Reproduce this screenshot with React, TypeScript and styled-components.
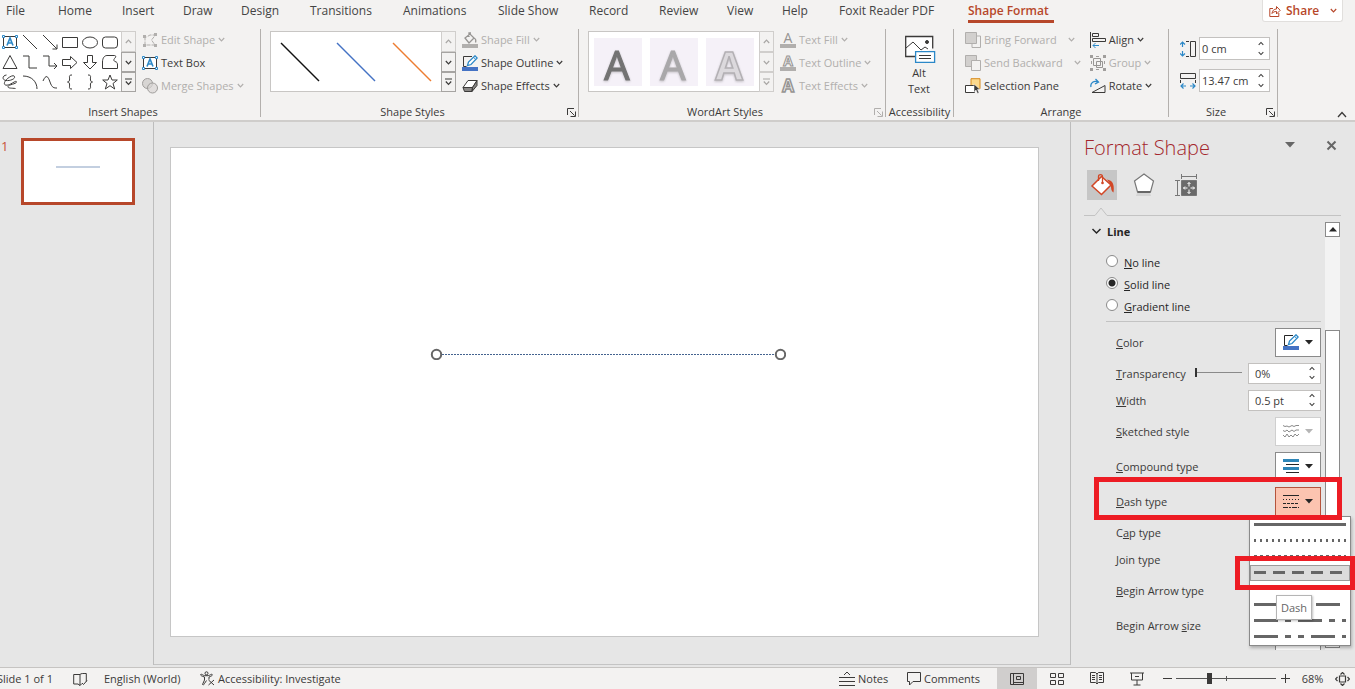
import React from "react";
import styled, { createGlobalStyle, css } from "styled-components";

const RED = "#b7472a";
const INK = "#3b3a39";
const DIM = "#b1afad";
const BLUE = "#2b88c8";

const Global = createGlobalStyle`
  * { box-sizing: border-box; }
  body { margin: 0; overflow: hidden; }
  body, button, input { font-family: "Open Sans", "Noto Sans", sans-serif; font-size: 11px; color: ${INK}; }
  button { padding: 0; margin: 0; border: 0; background: none; white-space: nowrap; }
`;

const Window = styled.div`
  height: 100vh;
  min-width: 1355px;
  display: flex;
  flex-direction: column;
  background: #e6e6e6;
`;

/* ---------- tab strip ---------- */
const TabStrip = styled.nav`
  display: flex;
  height: 29px;
  flex: none;
  background: #f3f2f1;
  padding-left: 6px;
`;
const Tab = styled.button<{ $w: number; $active?: boolean }>`
  width: ${(p) => p.$w}px;
  height: 23px;
  text-align: left;
  font-size: 12px;
  line-height: 22px;
  color: #444;
  display: flex;
  ${(p) => p.$active && css`
    color: ${RED};
    font-weight: 600;
    border-bottom: 3px solid ${RED};
  `}
`;
const ShareButton = styled.button`
  margin-left: auto;
  margin-right: 12px;
  width: 81px;
  height: 22px;
  background: #fff;
  border: 1px solid #e1dfdd;
  border-top: 0;
  border-radius: 0 0 3px 3px;
  display: flex;
  align-items: center;
  gap: 5px;
  padding-left: 6px;
  color: ${RED};
  font-size: 12px;
  font-weight: 600;
  svg:last-child { margin-left: 6px; }
`;

/* ---------- ribbon ---------- */
const Ribbon = styled.div`
  display: flex;
  flex: none;
  height: 93px;
  background: #f3f2f1;
  border-bottom: 2px solid #cfcdcb;
`;
const Group = styled.section<{ $w: number }>`
  width: ${(p) => p.$w}px;
  height: 88px;
  display: flex;
  flex-direction: column;
  border-right: 1px solid #b3b0ad;
`;
const GroupBody = styled.div<{ $left?: number; $gap?: number }>`
  flex: 1;
  display: flex;
  align-items: flex-start;
  gap: ${(p) => p.$gap ?? 6}px;
  padding: 2px 0 0 ${(p) => p.$left ?? 9}px;
`;
const GroupFooter = styled.div`
  height: 10px;
  display: flex;
  align-items: center;
  line-height: 14px;
`;
const GroupName = styled.span`
  flex: 1;
  text-align: center;
  white-space: nowrap;
`;
const Launcher = styled.button<{ $dim?: boolean }>`
  width: 14px;
  height: 12px;
  color: ${(p) => (p.$dim ? DIM : INK)};
  display: flex;
  align-items: center;
  justify-content: center;
`;
const Gallery = styled.div<{ $flush?: boolean }>`
  display: flex;
  height: 61px;
  background: #fff;
  border: 1px solid #c8c6c4;
  border-right: 0;
  ${(p) => p.$flush && css`border-left: 0;`}
`;
const ShapeGrid = styled.div`
  display: grid;
  grid-template-columns: repeat(6, 20px);
  grid-auto-rows: 20px;
  padding-right: 1px;
`;
const ShapeCell = styled.button`
  display: flex;
  align-items: center;
  justify-content: center;
`;
const StyleCells = styled.div<{ $pad: number }>`
  display: flex;
  align-items: center;
  gap: 8px;
  width: 170px;
  padding-left: ${(p) => p.$pad}px;
`;
const StyleCell = styled.button`
  width: 48px;
  height: 48px;
  display: flex;
`;
const Scroller = styled.div`
  display: grid;
  width: 15px;
  margin: -1px 0;
  grid-template-rows: 21px 20px 20px;
`;
const ScrollStep = styled.button<{ $dim?: boolean }>`
  border: 1px solid ${(p) => (p.$dim ? "#d0cecc" : "#a6a4a2")};
  background: #f3f2f1;
  color: ${(p) => (p.$dim ? "#a8a6a4" : INK)};
  display: flex;
  align-items: center;
  justify-content: center;
`;
const CommandColumn = styled.div`
  display: grid;
  grid-auto-rows: 23px;
  margin-top: -3px;
  justify-items: start;
`;
const AlignColumn = styled(CommandColumn)`
  margin-left: 9px;
`;
const Command = styled.button<{ $dim?: boolean; $chevGap?: number }>`
  display: flex;
  align-items: center;
  gap: 3px;
  color: ${(p) => (p.$dim ? DIM : INK)};
  > svg:last-child:not(:first-child) { margin-left: ${(p) => p.$chevGap ?? 0}px; }
`;
const AltButton = styled.button`
  width: 66px;
  display: flex;
  flex-direction: column;
  align-items: center;
  line-height: 16px;
  padding-top: 4px;
  svg { margin-bottom: 2px; margin-left: 2px; }
`;
const SizeRows = styled.div`
  display: grid;
  row-gap: 9px;
  padding-top: 6px;
`;
const SizeLabel = styled.label`
  display: flex;
  align-items: center;
  gap: 3px;
`;
const Spin = styled.span<{ $w: number; $h: number; $pad: number }>`
  display: flex;
  width: ${(p) => p.$w}px;
  height: ${(p) => p.$h}px;
  border: 1px solid #c3c1bf;
  background: #fff;
  input {
    flex: 1;
    min-width: 0;
    border: 0;
    outline: 0;
    background: none;
    padding: 0 0 0 ${(p) => p.$pad}px;
  }
`;
const SpinSteps = styled.span`
  width: 16px;
  display: grid;
  grid-template-rows: 1fr 1fr;
  button { display: flex; align-items: center; justify-content: center; }
`;
const CollapseButton = styled.button`
  margin-left: auto;
  align-self: flex-end;
  width: 26px;
  height: 14px;
`;

/* ---------- workspace ---------- */
const Workspace = styled.main`
  flex: 1;
  min-height: 0;
  display: flex;
  padding-bottom: 2px;
`;
const Thumbs = styled.aside`
  width: 154px;
  border-right: 1px solid #bdbdbd;
  display: flex;
  align-items: flex-start;
  padding: 16px 0 0 1px;
`;
const ThumbNumber = styled.span`
  width: 20px;
  font-size: 13px;
  line-height: 16px;
  color: #c8533a;
`;
const Thumb = styled.button`
  width: 114px;
  height: 67px;
  border: 3px solid ${RED};
  background: #fff;
  display: flex;
  justify-content: center;
  padding-top: 25px;
`;
const Stage = styled.section`
  flex: 1;
  display: flex;
  padding: 25px 31px 27px 16px;
  border-bottom: 1px solid #c4c4c4;
`;
const Slide = styled.div`
  flex: 1;
  position: relative;
  background: #fff;
  border: 1px solid #c6c6c6;
`;
const SelectedLine = styled.svg`
  position: absolute;
  left: 259px;
  top: 200px;
`;

/* ---------- format pane ---------- */
const Pane = styled.aside`
  position: relative;
  width: 285px;
  border-left: 1px solid #bdbdbd;
  display: flex;
  flex-direction: column;
`;
const PaneHead = styled.header`
  display: flex;
  align-items: center;
  height: 46px;
  padding: 6px 18px 0 13px;
  h2 {
    flex: 1;
    margin: 0;
    font-size: 20px;
    line-height: 28px;
    font-weight: 300;
    color: #a4262c;
  }
  button { display: flex; margin-left: 31px; margin-bottom: 6px; }
`;
const PaneTabs = styled.div`
  display: flex;
  gap: 12px;
  padding-left: 16px;
  height: 38px;
  padding-top: 2px;
`;
const PaneTab = styled.button<{ $on?: boolean }>`
  width: 30px;
  height: 30px;
  background: ${(p) => (p.$on ? "#c6c6c6" : "transparent")};
  display: flex;
  align-items: center;
  justify-content: center;
`;
const Notch = styled.svg`
  display: block;
  margin-left: 13px;
  width: 257px;
  height: 11px;
`;
const PaneScroll = styled.div`
  height: 433px;
  display: flex;
  overflow: hidden;
  padding: 5px 15px 0 0;
`;
const PaneBody = styled.div`
  flex: 1;
  padding-right: 4px;
`;
const SectionTitle = styled.button`
  display: flex;
  align-items: center;
  gap: 5px;
  margin-left: 20px;
  height: 18px;
  font-weight: 700;
  color: #262626;
`;
const Radios = styled.fieldset`
  border: 0;
  border-bottom: 1px solid #c3c3c3;
  margin: 11px 0 3px 35px;
  padding: 0 0 4px 0;
  display: grid;
  grid-auto-rows: 22px;
`;
const RadioLabel = styled.label`
  display: flex;
  align-items: center;
  gap: 6px;
  color: #262626;
  input {
    appearance: none;
    margin: 0 0 3px;
    width: 12px;
    height: 12px;
    border: 1px solid #8a8a8a;
    border-radius: 50%;
    background: #fff;
  }
  input:checked { background: radial-gradient(circle, #262626 0 3px, #fff 4px); }
`;
const Field = styled.div<{ $h: number }>`
  height: ${(p) => p.$h}px;
  margin-left: 45px;
  display: flex;
  align-items: center;
  justify-content: space-between;
  label { padding-top: 1px; }
`;
const DropButton = styled.button<{ $state?: "off" | "on" }>`
  width: 46px;
  height: 29px;
  flex: none;
  border: 1px solid ${(p) => (p.$state === "off" ? "#cfcfcf" : p.$state === "on" ? "#b5543c" : "#8a8a8a")};
  background: ${(p) => (p.$state === "on" ? "#fcc4b0" : "#fff")};
  color: ${(p) => (p.$state === "off" ? "#b5b5b5" : "#262626")};
  display: flex;
  align-items: center;
  justify-content: center;
  gap: 6px;
`;
const OpacitySlider = styled.input`
  appearance: none;
  margin: 0 6px 2px auto;
  width: 47px;
  height: 10px;
  background: linear-gradient(#8a8a8a, #8a8a8a) center / 100% 1px no-repeat;
  &::-webkit-slider-thumb { appearance: none; width: 2px; height: 9px; background: #333; }
`;
const ScrollBar = styled.div`
  width: 15px;
  display: flex;
  flex-direction: column;
  background: #f3f3f3;
  button {
    height: 15px;
    border: 1px solid #8a8a8a;
    background: #fff;
    display: flex;
    align-items: center;
    justify-content: center;
  }
`;
const ScrollThumb = styled.div`
  margin-top: 93px;
  height: 318px;
  border: 1px solid #8a8a8a;
  background: #fff;
`;
const DashMenu = styled.ul`
  position: absolute;
  right: 4px;
  top: 394px;
  width: 102px;
  height: 130px;
  margin: 0;
  padding: 0;
  list-style: none;
  background: #fff;
  border: 1px solid #8a8a8a;
  box-shadow: 1px 2px 3px rgba(0, 0, 0, 0.25);
`;
const DashItem = styled.li<{ $on?: boolean }>`
  height: 16px;
  display: flex;
  align-items: center;
  justify-content: center;
  svg { margin-bottom: 2px; }
  ${(p) => p.$on && css`
    background: #dcdcdc;
    outline: 1px solid #9b9b9b;
    outline-offset: -1px;
  `}
`;
const Tip = styled.div`
  position: absolute;
  right: 43px;
  top: 473px;
  width: 36px;
  height: 25px;
  background: #fff;
  border: 1px solid #b5b5b5;
  box-shadow: 1px 1px 2px rgba(0, 0, 0, 0.25);
  text-align: center;
  line-height: 23px;
  color: #666;
`;
const Marker = styled.div<{ $r: number; $t: number; $w: number; $h: number }>`
  position: absolute;
  right: ${(p) => p.$r}px;
  top: ${(p) => p.$t}px;
  width: ${(p) => p.$w}px;
  height: ${(p) => p.$h}px;
  border: 5px solid #ed1c24;
`;

/* ---------- status bar ---------- */
const StatusBar = styled.footer`
  height: 22px;
  flex: none;
  display: flex;
  align-items: center;
  background: #f3f2f1;
  border-top: 1px solid #c6c4c2;
  white-space: nowrap;
`;
const StatusItem = styled.button<{ $w: number }>`
  width: ${(p) => p.$w}px;
  height: 21px;
  display: flex;
  align-items: center;
  gap: 3px;
`;
const SlideCount = styled.span`
  width: 76px;
  margin-left: -3px;
`;
const ViewButton = styled.button<{ $on?: boolean }>`
  width: 40px;
  height: 21px;
  display: flex;
  align-items: center;
  justify-content: center;
  background: ${(p) => (p.$on ? "#d0cecd" : "transparent")};
`;
const RightStatus = styled.div`
  margin-left: auto;
  display: flex;
  align-items: center;
`;
const ZoomGroup = styled.div`
  display: flex;
  align-items: center;
  padding-left: 5px;
`;
const ZoomSlider = styled.input`
  appearance: none;
  width: 100px;
  height: 12px;
  margin: 0 4px;
  background:
    linear-gradient(#555, #555) center / 100% 1px no-repeat,
    linear-gradient(#555, #555) center / 1px 5px no-repeat;
  &::-webkit-slider-thumb { appearance: none; width: 5px; height: 11px; background: ${INK}; }
`;
const ZoomStep = styled.button`
  width: 10px;
  height: 12px;
  display: flex;
  align-items: center;
  justify-content: center;
`;
const ZoomValue = styled.button`
  width: 45px;
`;
const FitButton = styled.button`
  width: 20px;
  display: flex;
`;

/* ---------- drawings ---------- */
const Chev = ({ up, w = 7 }: { up?: boolean; w?: number }) => (
  <svg width={w} height="5" viewBox="0 0 7 5" fill="none" stroke="currentColor" strokeWidth="1.2">
    <path d={up ? "M.8 4 3.5 1.2 6.2 4" : "M.8 1 3.5 3.8 6.2 1"} />
  </svg>
);
const Caret = () => (
  <svg width="8" height="5" viewBox="0 0 8 5"><path d="M0 0h8L4 4.5z" fill="currentColor" /></svg>
);
const Ico = ({ children, w = 16, h = 16 }: { children: React.ReactNode; w?: number; h?: number }) => (
  <svg width={w} height={h} viewBox={`0 0 ${w} ${h}`} fill="none" stroke="currentColor">{children}</svg>
);
const TextBoxIcon = () => (
  <Ico>
    <path d="M1.5 2.5h13v11h-13z" fill="#fff" />
    <path d="M5 11.5 8 4l3 7.5M6 9h4" stroke={BLUE} strokeWidth="1.6" />
    <g fill="#fff" stroke={BLUE}>
      <path d="M.5 1.500h2v2h-2zM13.500 1.500h2v2h-2zM.5 12.500h2v2h-2zM13.500 12.500h2v2h-2z" />
    </g>
  </Ico>
);
const OutlineIcon = () => (
  <Ico>
    <path d="M10 1.500H1.500v10h3" />
    <path d="M5.500 10.500l1-3.500 6.500-6.200 2.200 2.200L9 9.500z" fill="#fff" stroke={BLUE} strokeWidth="1.300" />
    <path d="M11.500 2.200l2.200 2.300" stroke={BLUE} />
    <path d="M0 12h16v4H0z" fill="#4472c4" stroke="none" />
  </Ico>
);
const shapes: React.ReactNode[] = [
  null,
  <path d="M1 1l14 14" />,
  <path d="M1 1l14 14M15 10.500V15h-4.500" />,
  <path d="M.5 3.500h15v10H.5z" />,
  <ellipse cx="8" cy="8.500" rx="7.500" ry="5.500" />,
  <rect x=".5" y="3" width="15" height="11" rx="3" />,
  <path d="M8 1.500l7 13H1z" />,
  <path d="M1 2h6v12h8" />,
  <path d="M1 2h6v10h8M12 9l3 3-3 3" />,
  <path d="M.5 5.500h8v-3l6.500 6-6.500 6v-3h-8z" />,
  <path d="M5.500 1.500h5v7h4L8 15 1.500 8.500h4z" />,
  <path d="M5 1.500h7.500c1.500 0 1.500 1.500.5 2.500S11 6.500 13 7.500c2 .5 2.500 1.500 2.500 3.500v3.500H.5V8C.5 4 2.500 1.500 5 1.500z" />,
  <path d="M4.500 1C0 1.500 0 6 4 6.500s9.500-1.500 8.500-4S5 4 3 7.500 4 12 7.500 10.500 14.500 6 14.500 8 6.500 10.500 6 12.500s4 1.500 7.500 2" />,
  <path d="M1 2c9 0 14 6 14 13" />,
  <path d="M1 7c3-7 5-5 7 1s4 6 7 6" />,
  <path d="M10 1c-4 0-2 2-2.500 5C7.300 7.500 6.500 8 5.500 8c1 0 1.800.5 2 2C8 13 6 15 10 15" />,
  <path d="M6 1c4 0 2 2 2.500 5 .2 1.500 1 2 2 2-1 0-1.800.5-2 2C8 13 10 15 6 15" />,
  <path d="M8 1l2 5h5.300L11 9.500l1.700 5.500L8 11.700 3.300 15 5 9.500.7 6H6z" />,
];
const WordTile = styled.svg`
  display: block;
  overflow: visible;
  background: #f5f1f8;
  text {
    font-family: "Open Sans", sans-serif;
    font-size: 40px;
    filter: drop-shadow(0 1px 1px rgba(0, 0, 0, 0.2));
  }
`;
const WordA = ({ bg, outline }: { bg: string; outline?: string }) => (
  <WordTile width="48" height="48">
    <text x="23" y="42" textAnchor="middle" fill={bg} stroke={outline ?? bg} fontWeight={outline ? 700 : 400}
      strokeWidth={outline ? 1.5 : 1.2}>A</text>
  </WordTile>
);
const LetterIcon = styled.svg`
  overflow: visible;
  text { font-family: "Open Sans", sans-serif; }
`;
const SmallA = ({ bar, outline, heavy }: { bar?: boolean; outline?: boolean; heavy?: boolean }) => (
  <LetterIcon width="16" height="16">
    <text x="8" y={bar ? 11 : 14} textAnchor="middle" fontWeight={outline ? 700 : 400}
      fontSize={bar ? 14 : 17} fill={outline ? "#f3f2f1" : "#979593"} stroke={outline ? "#979593" : "none"}
      strokeWidth={heavy ? 1.5 : 1}>A</text>
    {bar && <path d="M0 12h16v4H0z" fill="#b1afad" />}
  </LetterIcon>
);
const LaunchIcon = () => (
  <Ico w={9} h={9}><path d="M.5 7V.5H7M3 3l4.500 4.500M8.500 3.500v5h-5" /></Ico>
);

const Steps = ({ name }: { name: string }) => (
  <SpinSteps>
    <button aria-label={`Increase ${name}`}><Chev up w={6} /></button>
    <button aria-label={`Decrease ${name}`}><Chev w={6} /></button>
  </SpinSteps>
);
const GalleryScroller = ({ dim }: { dim?: boolean }) => (
  <Scroller>
    <ScrollStep $dim aria-label="Scroll up"><Chev up /></ScrollStep>
    <ScrollStep $dim={dim} aria-label="Scroll down"><Chev /></ScrollStep>
    <ScrollStep $dim={dim} aria-label="More">
      <Ico w={7} h={8}><path d="M0 1h7M.8 3.500 3.500 6.300 6.200 3.500" strokeWidth="1.200" /></Ico>
    </ScrollStep>
  </Scroller>
);

const tabs: [string, number][] = [
  ["File", 52], ["Home", 64], ["Insert", 61], ["Draw", 58], ["Design", 69], ["Transitions", 93],
  ["Animations", 95], ["Slide Show", 91], ["Record", 70], ["Review", 68], ["View", 55], ["Help", 57],
  ["Foxit Reader PDF", 129], ["Shape Format", 86],
];
const dashes: [string, string][] = [
  ["Solid", ""], ["Round Dot", "2 4"], ["Square Dot", "3 3"], ["Dash", "12 7"], ["Dash Dot", "12 7 6 7"],
  ["Long Dash", "24 7"], ["Long Dash Dot", "24 7 6 7"], ["Long Dash Dot Dot", "24 7 6 7 6 7"],
];

export default function App() {
  return (
    <Window>
      <Global />
      <TabStrip>
        {tabs.map(([t, w]) => (
          <Tab key={t} $w={w} $active={t === "Shape Format"}>{t}</Tab>
        ))}
        <ShareButton>
          <Ico w={12} h={12}>
            <path d="M4 3.500H.8v8h9V8M3 8.500c.3-3 2-4.500 4.500-4.500V1.500l3.700 3.800L7.500 9V6.500C5.500 6.500 4 7 3 8.500z" />
          </Ico>
          Share
          <Chev />
        </ShareButton>
      </TabStrip>

      <Ribbon>
        <Group $w={261}>
          <GroupBody $left={0}>
            <Gallery $flush>
              <ShapeGrid>
                {shapes.map((s, i) => (
                  <ShapeCell key={i} aria-label={`Shape ${i + 1}`}>{s ? <Ico>{s}</Ico> : <TextBoxIcon />}</ShapeCell>
                ))}
              </ShapeGrid>
              <GalleryScroller />
            </Gallery>
            <CommandColumn>
              <Command $dim>
                <Ico>
                  <path d="M3 4.500V13h10L9.500 8l4-5H8L4.500 5" strokeDasharray="4 1" />
                  <path d="M1 3h3v3H1zM12 1h3v3h-3zM1 12h3v3H1zM12 12h3v3h-3z" fill="currentColor" stroke="none" />
                </Ico>
                Edit Shape<Chev />
              </Command>
              <Command><TextBoxIcon />Text Box</Command>
              <Command $dim>
                <Ico>
                  <circle cx="5.500" cy="5.500" r="5" fill="#d8d6d4" stroke="#a09e9c" />
                  <circle cx="10.500" cy="10" r="5" fill="#d8d6d4" fillOpacity=".7" stroke="#a09e9c" />
                </Ico>
                Merge Shapes<Chev />
              </Command>
            </CommandColumn>
          </GroupBody>
          <GroupFooter><GroupName>Insert Shapes</GroupName><Launcher as="span" /></GroupFooter>
        </Group>

        <Group $w={318}>
          <GroupBody $left={9}>
            <Gallery>
              <StyleCells $pad={5}>
                {["#111", "#4472c4", "#ed7d31"].map((c) => (
                  <StyleCell key={c} aria-label="Line style">
                    <svg width="48" height="48" stroke={c} strokeWidth="1.400"><path d="M5 5l38 38" /></svg>
                  </StyleCell>
                ))}
              </StyleCells>
              <GalleryScroller />
            </Gallery>
            <CommandColumn>
              <Command $dim>
                <Ico><path d="M3 6l5-4 4 4-5 5zM7 5V1h2M12 6c2 1 2 3 1.500 4.500" strokeWidth="1.300" stroke="#979593" /><path d="M0 12h16v4H0z" fill="currentColor" stroke="none" /></Ico>
                Shape Fill<Chev />
              </Command>
              <Command><OutlineIcon />Shape Outline<Chev /></Command>
              <Command>
                <Ico><path d="M6 2.500h9l-4.500 7H1z" fill="#fff" /><path d="M1 9.500h9.500l-.5 4H2.500zM15 2.500v5L10 13.500l.5-4z" fill="#8a8886" /></Ico>
                Shape Effects<Chev />
              </Command>
            </CommandColumn>
          </GroupBody>
          <GroupFooter><GroupName>Shape Styles</GroupName><Launcher aria-label="Shape styles options"><LaunchIcon /></Launcher></GroupFooter>
        </Group>

        <Group $w={307}>
          <GroupBody $left={9}>
            <Gallery>
              <StyleCells $pad={5}>
                <StyleCell aria-label="Fill dark"><WordA bg="#737373" /></StyleCell>
                <StyleCell aria-label="Fill gray"><WordA bg="#a9a8aa" /></StyleCell>
                <StyleCell aria-label="Fill light, outline"><WordA bg="#dcd9dd" outline="#b3b0b4" /></StyleCell>
              </StyleCells>
              <GalleryScroller dim />
            </Gallery>
            <CommandColumn>
              <Command $dim><SmallA bar />Text Fill<Chev /></Command>
              <Command $dim><SmallA bar outline />Text Outline<Chev /></Command>
              <Command $dim><SmallA outline heavy />Text Effects<Chev /></Command>
            </CommandColumn>
          </GroupBody>
          <GroupFooter><GroupName>WordArt Styles</GroupName><Launcher $dim aria-label="WordArt options"><LaunchIcon /></Launcher></GroupFooter>
        </Group>

        <Group $w={68}>
          <GroupBody $left={0}>
            <AltButton>
              <Ico w={31} h={28}>
                <path d="M10 21.500H.7V1.500h27v12" fill="#fff" strokeWidth="1.300" />
                <path d="M1 13l7-6 8 8 4-3 3 2" />
                <circle cx="22" cy="7" r="1.500" fill="currentColor" />
                <path d="M10.600 16.600h19v10.800h-19z" fill="#fff" stroke={BLUE} strokeWidth="1.300" />
                <path d="M14 20.500h12M14 23.500h12" />
              </Ico>
              <span>Alt<br />Text</span>
            </AltButton>
          </GroupBody>
          <GroupFooter><GroupName>Accessibility</GroupName></GroupFooter>
        </Group>

        <Group $w={215}>
          <GroupBody $left={11} $gap={0}>
            <CommandColumn>
              <Command $dim $chevGap={8}>
                <Ico><path d="M10 4h5.500v11.500H7V11" /><path d="M.5.500h11v11H.5z" fill="#d2d0ce" /></Ico>
                Bring Forward<Chev />
              </Command>
              <Command $dim $chevGap={8}>
                <Ico><path d="M.5.500h11v11H.5z" fill="#d2d0ce" /><path d="M6.500 5.500h9v10h-9z" fill="#f3f2f1" /></Ico>
                Send Backward<Chev />
              </Command>
              <Command>
                <Ico>
                  <path d="M6 .7h9v10H6z" fill="#fbd88c" stroke="#d88a1c" />
                  <path d="M.5 7.500h9v7h-9z" fill="#fff" />
                  <path d="M9 6v8l2-2 1.500 3.500 1.500-.8-1.500-3.200h2.500z" fill={INK} stroke="#fff" strokeWidth=".5" />
                </Ico>
                Selection Pane
              </Command>
            </CommandColumn>
            <AlignColumn>
              <Command>
                <Ico><path d="M.5 0v16M2.500 1.500h6v3h-6zM2.500 6.500h13v3h-13z" /><path d="M9 13.500H3M5.500 11L3 13.500 5.500 16" stroke={BLUE} /></Ico>
                Align<Chev />
              </Command>
              <Command $dim>
                <Ico>
                  <path d="M3.500 3.500h7v7h-7zM6.500 6.500h6v6h-6z" stroke="#979593" />
                  <path d="M0 0h3v3H0zM13 0h3v3h-3zM0 13h3v3H0zM13 13h3v3h-3zM6 1h3v1H6zM6 14h3v1H6zM1 6h1v3H1zM14 6h1v3h-1z" fill="#a09e9c" stroke="none" />
                </Ico>
                Group<Chev />
              </Command>
              <Command>
                <Ico><path d="M2 14.500h13v-7z" /><path d="M1 9c-1-4 3-7 7-5M5.500 1L8.500 4 5 6" stroke={BLUE} strokeWidth="1.300" /></Ico>
                Rotate<Chev />
              </Command>
            </AlignColumn>
          </GroupBody>
          <GroupFooter><GroupName>Arrange</GroupName></GroupFooter>
        </Group>

        <Group $w={109}>
          <GroupBody $left={11}>
            <SizeRows>
              <SizeLabel>
                <Ico><path d="M10.500.5h5v15h-5zM6 .5h3M6 15.500h3" /><path d="M2.500 1v5M2.500 10v5M0 3.500L2.500 1 5 3.500M0 12.500L2.500 15 5 12.500" stroke={BLUE} strokeWidth="1.200" /></Ico>
                <Spin $w={71} $h={23} $pad={2}><input aria-label="Shape height" defaultValue="0 cm" /><Steps name="height" /></Spin>
              </SizeLabel>
              <SizeLabel>
                <Ico><path d="M.5.500h15v5H.5zM.5 7v3M15.500 7v3" /><path d="M1 13h5M10 13h5M3.500 10.500L1 13l2.500 2.500M12.500 10.500L15 13l-2.500 2.500" stroke={BLUE} strokeWidth="1.200" /></Ico>
                <Spin $w={71} $h={23} $pad={2}><input aria-label="Shape width" defaultValue="13.47 cm" /><Steps name="width" /></Spin>
              </SizeLabel>
            </SizeRows>
          </GroupBody>
          <GroupFooter><GroupName>Size</GroupName><Launcher aria-label="Size options"><LaunchIcon /></Launcher></GroupFooter>
        </Group>
        <CollapseButton aria-label="Collapse ribbon">
          <Ico w={10} h={7}><path d="M1 6l4-4.500L9 6" strokeWidth="1.300" /></Ico>
        </CollapseButton>
      </Ribbon>

      <Workspace>
        <Thumbs>
          <ThumbNumber>1</ThumbNumber>
          <Thumb aria-label="Slide 1">
            <svg width="44" height="2"><path d="M0 1h44" stroke="#c3cfe0" strokeWidth="2" /></svg>
          </Thumb>
        </Thumbs>
        <Stage>
          <Slide>
            <SelectedLine width="356" height="12">
              <path d="M12 6.500h332" stroke="#44638f" strokeDasharray="2 1" />
              <g fill="#fff" stroke="#666" strokeWidth="2">
                <circle cx="6.500" cy="6.500" r="4.700" /><circle cx="350.500" cy="6.500" r="4.700" />
              </g>
            </SelectedLine>
          </Slide>
        </Stage>
        <Pane>
          <PaneHead>
            <h2>Format Shape</h2>
            <button aria-label="Pane options"><svg width="10" height="6"><path d="M0 0h10L5 5.500z" fill="#666" /></svg></button>
            <button aria-label="Close pane"><Ico w={11} h={11}><path d="M1.500 1.500l8 8M9.500 1.500l-8 8" stroke="#666" strokeWidth="2" /></Ico></button>
          </PaneHead>
          <PaneTabs>
            <PaneTab $on aria-label="Fill and line">
              <Ico w={24} h={24}>
                <path d="M11.500 3.500L21 12l-9.500 9.500L2 13z" fill="#fff" stroke="#d24726" strokeWidth="1.500" />
                <path d="M8.500 8V3.500C8.500 1 12.500 1 12.500 3.500V10" stroke="#d24726" strokeWidth="1.300" />
                <circle cx="12.500" cy="10" r="1.300" fill="#d24726" stroke="none" />
                <path d="M17 6.500c6 1 7.500 5 6.500 13-3-2-2-5-3-8z" fill="#d24726" stroke="none" />
              </Ico>
            </PaneTab>
            <PaneTab aria-label="Effects">
              <Ico w={22} h={24}>
                <path d="M4 20h13l1 3H3z" fill="#d4d4d4" stroke="none" />
                <path d="M11 1l9.500 7-3 11h-13l-3-11z" fill="#fff" stroke="#777" strokeWidth="1.200" />
                <path d="M4.500 19h13" stroke="#666" strokeWidth="2" />
              </Ico>
            </PaneTab>
            <PaneTab aria-label="Size and properties">
              <Ico w={22} h={22}>
                <g stroke="#777">
                  <path d="M6.500 2.500h15M6.500 0v5M21.500 0v5M2.500 7v14M0 6.500h5M0 21.500h5" />
                  <path d="M6.500 6.500h15v15h-15z" fill="#6a6a6a" />
                </g>
                <path d="M14 8.500v4M14 15.500v4M8.500 14h4M15.500 14h4M12.500 10L14 8.500l1.500 1.500M12.500 18l1.500 1.500 1.500-1.500M10 12.500L8.500 14l1.500 1.500M18 12.500l1.500 1.500-1.500 1.500" stroke="#fff" />
              </Ico>
            </PaneTab>
          </PaneTabs>
          <Notch viewBox="0 0 257 11" fill="none" stroke="#c3c3c3">
            <path d="M0 9.500h11l6-7.500 6 7.500h234" />
          </Notch>
          <PaneScroll>
            <PaneBody>
              <SectionTitle>
                <Ico w={11} h={7}><path d="M1.500 1l4 4 4-4" strokeWidth="1.500" /></Ico>Line
              </SectionTitle>
              <Radios>
                <RadioLabel><input type="radio" name="line" /><span><u>N</u>o line</span></RadioLabel>
                <RadioLabel><input type="radio" name="line" defaultChecked /><span><u>S</u>olid line</span></RadioLabel>
                <RadioLabel><input type="radio" name="line" /><span><u>G</u>radient line</span></RadioLabel>
              </Radios>
              <Field $h={34}><label htmlFor="color"><u>C</u>olor</label><DropButton id="color"><OutlineIcon /><Caret /></DropButton></Field>
              <Field $h={28}>
                <label htmlFor="alpha"><u>T</u>ransparency</label>
                <OpacitySlider id="alpha" type="range" defaultValue={0} />
                <Spin $w={73} $h={21} $pad={6}><input aria-label="Transparency value" defaultValue="0%" /><Steps name="transparency" /></Spin>
              </Field>
              <Field $h={26}>
                <label htmlFor="width"><u>W</u>idth</label>
                <Spin $w={73} $h={21} $pad={6}><input id="width" defaultValue="0.5 pt" /><Steps name="line width" /></Spin>
              </Field>
              <Field $h={36}>
                <label htmlFor="sketch"><u>S</u>ketched style</label>
                <DropButton id="sketch" $state="off">
                  <Ico w={16} h={14}>
                    <path d="M0 1.500l2 1 2-.5 2 1 3-1.500 2 1 2-1 3 0M0 6.500l2 1 2-1.500 2 2 3-2 2 1.500 2-1.500 3 0M0 11l2 2 2-3 2 3 2-2 2 2 2-3 2 2 2-2" stroke="#8a8a8a" />
                  </Ico>
                  <Caret />
                </DropButton>
              </Field>
              <Field $h={34}>
                <label htmlFor="compound"><u>C</u>ompound type</label>
                <DropButton id="compound">
                  <Ico w={16} h={14}>
                    <path d="M0 1.500h16M0 9.500h16" stroke="#2e86b8" strokeWidth="3" />
                    <path d="M3 5.500h13M3 13.500h13" stroke="#262626" />
                  </Ico>
                  <Caret />
                </DropButton>
              </Field>
              <Field $h={36}>
                <label htmlFor="dash"><u>D</u>ash type</label>
                <DropButton id="dash" $state="on">
                  <Ico w={16} h={14}>
                    <path d="M0 1.500h16" /><path d="M0 5.500h16" strokeDasharray="1 2" />
                    <path d="M0 9.500h16" strokeDasharray="3 1" /><path d="M0 13.500h16" strokeDasharray="5 1 2 1" />
                  </Ico>
                  <Caret />
                </DropButton>
              </Field>
              <Field $h={26}><label>C<u>a</u>p type</label></Field>
              <Field $h={28}><label><u>J</u>oin type</label></Field>
              <Field $h={34}><label><u>B</u>egin Arrow type</label></Field>
              <Field $h={36}><label>Begin Arrow <u>s</u>ize</label></Field>
              <Field $h={29}><span /><DropButton aria-label="End arrow type" /></Field>
            </PaneBody>
            <ScrollBar>
              <button aria-label="Scroll up"><svg width="8" height="5"><path d="M4 0l4 4.500H0z" fill="#262626" /></svg></button>
              <ScrollThumb />
            </ScrollBar>
          </PaneScroll>
          <DashMenu>
            {dashes.map(([name, d]) => (
              <DashItem key={name} $on={name === "Dash"} aria-label={name}>
                <svg width="92" height="3"><path d="M0 1.500h92" stroke="#666" strokeWidth="3" strokeDasharray={d || undefined} /></svg>
              </DashItem>
            ))}
          </DashMenu>
          <Tip role="tooltip">Dash</Tip>
          <Marker $r={13} $t={355} $w={248} $h={43} />
          <Marker $r={0} $t={434} $w={120} $h={34} />
        </Pane>
      </Workspace>

      <StatusBar>
        <SlideCount>Slide 1 of 1</SlideCount>
        <StatusItem $w={31} aria-label="Spelling">
          <Ico w={15} h={14}><path d="M7 2.500H.7v9.500H5l2 1.500V2.500c1-1.200 3-1 6.300-1v8M7 13.500l2-2M9 11l1.500 1.500 3.500-4" /></Ico>
        </StatusItem>
        <StatusItem $w={96}>English (World)</StatusItem>
        <StatusItem $w={160}>
          <Ico w={15} h={15}>
            <circle cx="6.500" cy="2.300" r="1.500" />
            <path d="M.7 3.500c1-.8 2 .8 4 1.200h3.500c2-.4 3-2 4-1.200.8 1-1.500 1.800-3.200 2.500v2.500M4.500 6v3l-2 4.500c.8 1 1.500 0 2-1l2-3M.7 3.500c-.4.900.8 1.500 3.800 2.500M8.500 9l5.500 5M14 9l-5.500 5" />
          </Ico>
          Accessibility: Investigate
        </StatusItem>
        <RightStatus>
          <StatusItem $w={68}>
            <Ico><path d="M0 6.500h16M0 10.500h16M0 14.500h16M5 4l3-3 3 3" /></Ico>Notes
          </StatusItem>
          <StatusItem $w={90}>
            <Ico w={14} h={14}><path d="M.5.500h13v9H6L2.500 13V9.500h-2z" /></Ico>Comments
          </StatusItem>
          <ViewButton $on aria-label="Normal view"><Ico w={14} h={12}><path d="M.5.500h13v11H.5zM3.500.5v11M3.500 9.500h10M6.500 3.500h4v3h-4z" /></Ico></ViewButton>
          <ViewButton aria-label="Slide sorter"><Ico w={14} h={12}><path d="M.5.500h5v4h-5zM8.500.5h5v4h-5zM.5 7.500h5v4h-5zM8.500 7.500h5v4h-5z" /></Ico></ViewButton>
          <ViewButton aria-label="Reading view"><Ico w={14} h={13}><path d="M.5.500h5L7 2l1.500-1.500h5v10h-5L7 12l-1.500-1.500h-5zM7 2v10M2 3.500h3M2 5.500h3M2 7.500h3M9 3.500h3M9 5.500h3M9 7.500h3" /></Ico></ViewButton>
          <ViewButton aria-label="Slide show"><Ico w={14} h={14}><path d="M0 1h14M1.500 1v7h11V1M5 4.500h4M7 8v5M3.500 13h7" /></Ico></ViewButton>
          <ZoomGroup>
            <ZoomStep aria-label="Zoom out"><Ico w={9} h={9}><path d="M0 4.500h9" /></Ico></ZoomStep>
            <ZoomSlider type="range" aria-label="Zoom" min={0} max={100} defaultValue={33} />
            <ZoomStep aria-label="Zoom in"><Ico w={9} h={9}><path d="M0 4.500h9M4.500 0v9" /></Ico></ZoomStep>
            <ZoomValue>68%</ZoomValue>
            <FitButton aria-label="Fit slide">
              <Ico w={15} h={14}><path d="M4.500 4h6v6h-6zM5.500 2.500l2-2 2 2M5.500 11.500l2 2 2-2M2.500 5l-2 2 2 2M12.500 5l2 2-2 2" strokeWidth="1.200" /></Ico>
            </FitButton>
          </ZoomGroup>
        </RightStatus>
      </StatusBar>
    </Window>
  );
}
